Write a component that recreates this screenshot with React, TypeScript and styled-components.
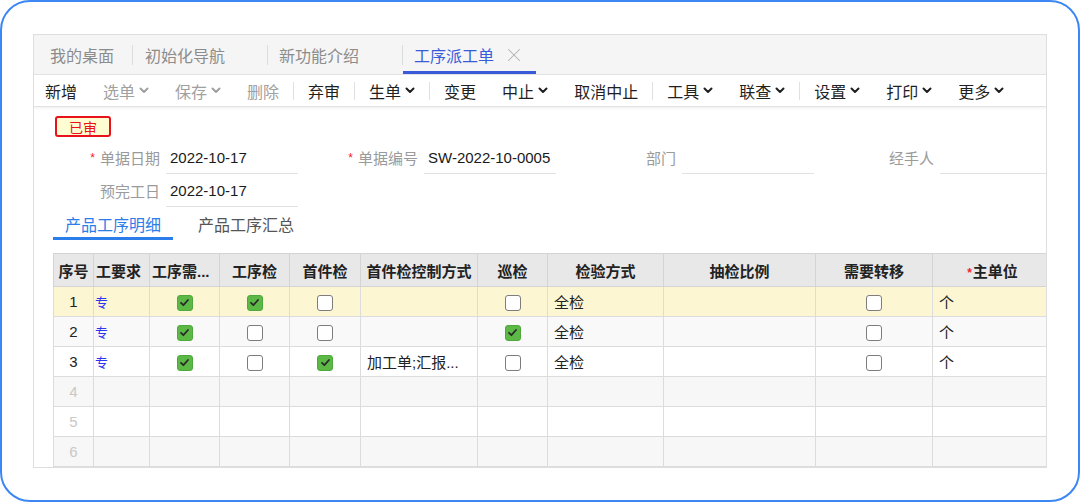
import React from 'react';
import styled, { createGlobalStyle } from 'styled-components';
import { X } from 'lucide-react';

const GlobalStyle = createGlobalStyle`
  html, body {
    margin: 0;
    padding: 0;
    background: #fff;
  }
  body {
    font-family: "Liberation Sans", "Noto Sans CJK SC", sans-serif;
  }
  * {
    box-sizing: border-box;
  }
`;

const Frame = styled.div`
  width: 1080px;
  height: 502px;
  border: 2px solid #3d87f5;
  border-radius: 30px;
  padding: 32px 0 0 31px;
  background: #fff;
  overflow: hidden;
`;

const Panel = styled.div`
  width: 1014px;
  border: 1px solid #dedede;
  display: flex;
  flex-direction: column;
  overflow: hidden;
`;

/* top tabs */
const TabBar = styled.div`
  display: flex;
  align-items: stretch;
  height: 40px;
  background: #f5f5f5;
  border-bottom: 1px solid #e4e4e4;
`;

const Tab = styled.div<{ $w: number; $pl: number; $active?: boolean }>`
  width: ${p => p.$w}px;
  padding: 3px 0 0 ${p => p.$pl}px;
  display: flex;
  align-items: center;
  font-size: 16px;
  color: ${p => (p.$active ? '#3a5bd9' : '#8c8c8c')};
  border-bottom: 3px solid ${p => (p.$active ? '#3a5bd9' : 'transparent')};
  white-space: nowrap;
`;

const TabSep = styled.span`
  width: 1px;
  height: 20px;
  align-self: center;
  background: #dcdcdc;
`;

const TabClose = styled.span`
  display: flex;
  margin-left: 9px;
  color: #b0b0b0;
`;

/* toolbar */
const Toolbar = styled.div`
  display: flex;
  align-items: center;
  height: 32px;
  background: #fff;
  border-bottom: 1px solid #e2e2e2;
  box-shadow: 0 1px 3px rgba(0, 0, 0, 0.07);
`;

const ToolButton = styled.div<{ $disabled?: boolean }>`
  display: flex;
  align-items: center;
  padding: 0 13px;
  font-size: 16px;
  color: ${p => (p.$disabled ? '#a0a0a0' : '#1f1f1f')};
  white-space: nowrap;
  &:first-child {
    padding-left: 11px;
  }
`;

const Caret = styled.svg`
  margin-left: 4px;
`;

const ToolSep = styled.span`
  width: 1px;
  height: 18px;
  margin: 0 1px;
  background: #e0e0e0;
`;

/* form */
const Content = styled.div`
  padding-top: 9px;
`;

const Stamp = styled.div`
  margin-left: 21px;
  width: 56px;
  height: 21px;
  border: 2px solid #e8121b;
  border-radius: 3px;
  background: #fffdd2;
  color: #e8121b;
  font-size: 14px;
  display: flex;
  align-items: center;
  justify-content: center;
`;

const FormGrid = styled.div`
  display: grid;
  grid-template-columns: repeat(4, 258px);
  grid-auto-rows: 33px;
  padding-left: 6px;
  margin-top: 4px;
`;

const Field = styled.div`
  display: flex;
  align-items: stretch;
`;

const Label = styled.div`
  width: 120px;
  display: flex;
  align-items: center;
  justify-content: flex-end;
  font-size: 15px;
  color: #9a9a9a;
  white-space: nowrap;
`;

const Required = styled.span`
  color: #f5222d;
  font-size: 12px;
  margin-right: 5px;
`;

const Input = styled.div`
  width: 132px;
  margin-left: 6px;
  padding-left: 4px;
  border-bottom: 1px solid #e2e2e2;
  display: flex;
  align-items: center;
  font-size: 15px;
  color: #1a1a1a;
  white-space: nowrap;
`;

/* sub tabs */
const SubTabBar = styled.div`
  display: flex;
  gap: 13px;
  height: 32px;
  padding-left: 19px;
  margin-top: 1px;
`;

const SubTab = styled.div<{ $active?: boolean }>`
  display: flex;
  align-items: center;
  padding: 3px 12px 0;
  font-size: 16px;
  color: ${p => (p.$active ? '#2b7de9' : '#555')};
  border-bottom: 3px solid ${p => (p.$active ? '#2b7de9' : 'transparent')};
`;

/* grid */
const TableWrap = styled.div`
  margin: 13px 0 0 19px;
  overflow: hidden;
`;

const Grid = styled.table`
  border-collapse: collapse;
  table-layout: fixed;
  width: 999px;
  font-size: 15px;
  color: #222;
`;

const HeadCell = styled.th<{ $align?: string }>`
  height: 33px;
  padding: 0 ${p => (p.$align === 'left' ? '2px' : '0')};
  background: #e8e8e8;
  border: 1px solid #d4d4d4;
  font-weight: 600;
  color: #222;
  text-align: ${p => p.$align || 'center'};
  white-space: nowrap;
  overflow: hidden;
`;

const Star = styled.span`
  color: #f5222d;
  font-size: 12px;
  margin-right: 1px;
`;

const Row = styled.tr<{ $bg: string }>`
  background: ${p => p.$bg};
`;

const Cell = styled.td<{ $align?: string; $pad?: number }>`
  height: 30px;
  padding: 0 ${p => (p.$pad ?? 6)}px;
  border: 1px solid #dcdcdc;
  text-align: ${p => p.$align || 'left'};
  white-space: nowrap;
  overflow: hidden;
`;

const RowNo = styled.span<{ $empty?: boolean }>`
  color: ${p => (p.$empty ? '#c8c8c8' : '#222')};
`;

const Tag = styled.span`
  color: #2f34f0;
  font-size: 13px;
`;

const Box = styled.span<{ $checked?: boolean }>`
  display: inline-flex;
  align-items: center;
  justify-content: center;
  width: 16px;
  height: 16px;
  vertical-align: middle;
  border-radius: 3px;
  border: ${p => (p.$checked ? '1px solid #4ea83c' : '1.5px solid #7d7d7d')};
  background: ${p => (p.$checked ? '#5cb946' : '#fff')};
`;

const Chevron = () => (
  <Caret width="10" height="7" viewBox="0 0 10 7">
    <path d="M1.5 1.5 L5 5 L8.5 1.5" fill="none" stroke="currentColor" strokeWidth="2" strokeLinecap="round" strokeLinejoin="round" />
  </Caret>
);

const Check = ({ on }: { on: boolean }) => (
  <Box $checked={on}>
    {on && (
      <svg width="11" height="11" viewBox="0 0 11 11">
        <path d="M2 5.8 L4.4 8.2 L9 3" fill="none" stroke="#2b2b2b" strokeWidth="1.8" strokeLinecap="round" strokeLinejoin="round" />
      </svg>
    )}
  </Box>
);

const tools: { label: string; menu?: boolean; disabled?: boolean; sep?: boolean }[] = [
  { label: '新增' },
  { label: '选单', menu: true, disabled: true },
  { label: '保存', menu: true, disabled: true },
  { label: '删除', disabled: true, sep: true },
  { label: '弃审', sep: true },
  { label: '生单', menu: true, sep: true },
  { label: '变更' },
  { label: '中止', menu: true },
  { label: '取消中止', sep: true },
  { label: '工具', menu: true },
  { label: '联查', menu: true, sep: true },
  { label: '设置', menu: true },
  { label: '打印', menu: true },
  { label: '更多', menu: true },
];

const columns: { title: string; width: number; align?: string; required?: boolean }[] = [
  { title: '序号', width: 40 },
  { title: '工要求', width: 56, align: 'left' },
  { title: '工序需...', width: 70, align: 'left' },
  { title: '工序检', width: 70 },
  { title: '首件检', width: 71 },
  { title: '首件检控制方式', width: 117 },
  { title: '巡检', width: 70 },
  { title: '检验方式', width: 116 },
  { title: '抽检比例', width: 152 },
  { title: '需要转移', width: 117 },
  { title: '主单位', width: 120, required: true },
];

type Line = {
  tag: string;
  need: boolean;
  proc: boolean;
  first: boolean;
  ctrl: string;
  patrol: boolean;
  method: string;
  move: boolean;
  unit: string;
};

const lines: Line[] = [
  { tag: '专', need: true, proc: true, first: false, ctrl: '', patrol: false, method: '全检', move: false, unit: '个' },
  { tag: '专', need: true, proc: false, first: false, ctrl: '', patrol: true, method: '全检', move: false, unit: '个' },
  { tag: '专', need: true, proc: false, first: true, ctrl: '加工单;汇报...', patrol: false, method: '全检', move: false, unit: '个' },
];

const rowBg = (i: number) => (i === 0 ? '#fdf6d3' : i % 2 === 1 ? '#f9f9f9' : '#fff');

export default function App() {
  return (
    <>
      <GlobalStyle />
      <Frame>
        <Panel>
          <TabBar>
            <Tab $w={98} $pl={16}>我的桌面</Tab>
            <TabSep />
            <Tab $w={134} $pl={12}>初始化导航</Tab>
            <TabSep />
            <Tab $w={134} $pl={11}>新功能介绍</Tab>
            <TabSep />
            <Tab $w={133} $pl={11} $active>
              工序派工单
              <TabClose><X size={22} strokeWidth={1.1} /></TabClose>
            </Tab>
          </TabBar>

          <Toolbar>
            {tools.map(t => (
              <React.Fragment key={t.label}>
                <ToolButton $disabled={t.disabled}>
                  {t.label}
                  {t.menu && <Chevron />}
                </ToolButton>
                {t.sep && <ToolSep />}
              </React.Fragment>
            ))}
          </Toolbar>

          <Content>
            <Stamp>已审</Stamp>
            <FormGrid>
              <Field>
                <Label><Required>*</Required>单据日期</Label>
                <Input>2022-10-17</Input>
              </Field>
              <Field>
                <Label><Required>*</Required>单据编号</Label>
                <Input>SW-2022-10-0005</Input>
              </Field>
              <Field>
                <Label>部门</Label>
                <Input />
              </Field>
              <Field>
                <Label>经手人</Label>
                <Input />
              </Field>
              <Field>
                <Label>预完工日</Label>
                <Input>2022-10-17</Input>
              </Field>
            </FormGrid>

            <SubTabBar>
              <SubTab $active>产品工序明细</SubTab>
              <SubTab>产品工序汇总</SubTab>
            </SubTabBar>

            <TableWrap>
              <Grid>
                <colgroup>
                  {columns.map(c => (
                    <col key={c.title} style={{ width: c.width }} />
                  ))}
                </colgroup>
                <thead>
                  <tr>
                    {columns.map(c => (
                      <HeadCell key={c.title} $align={c.align}>
                        {c.required && <Star>*</Star>}
                        {c.title}
                      </HeadCell>
                    ))}
                  </tr>
                </thead>
                <tbody>
                  {lines.map((l, i) => (
                    <Row key={i} $bg={rowBg(i)}>
                      <Cell $align="center"><RowNo>{i + 1}</RowNo></Cell>
                      <Cell $pad={1}><Tag>{l.tag}</Tag></Cell>
                      <Cell $align="center"><Check on={l.need} /></Cell>
                      <Cell $align="center"><Check on={l.proc} /></Cell>
                      <Cell $align="center"><Check on={l.first} /></Cell>
                      <Cell>{l.ctrl}</Cell>
                      <Cell $align="center"><Check on={l.patrol} /></Cell>
                      <Cell>{l.method}</Cell>
                      <Cell />
                      <Cell $align="center"><Check on={l.move} /></Cell>
                      <Cell>{l.unit}</Cell>
                    </Row>
                  ))}
                  {[4, 5, 6].map(n => (
                    <Row key={n} $bg={n % 2 === 0 ? '#f7f7f7' : '#fff'}>
                      <Cell $align="center"><RowNo $empty>{n}</RowNo></Cell>
                      {columns.slice(1).map(c => (
                        <Cell key={c.title} />
                      ))}
                    </Row>
                  ))}
                </tbody>
              </Grid>
            </TableWrap>
          </Content>
        </Panel>
      </Frame>
    </>
  );
}
